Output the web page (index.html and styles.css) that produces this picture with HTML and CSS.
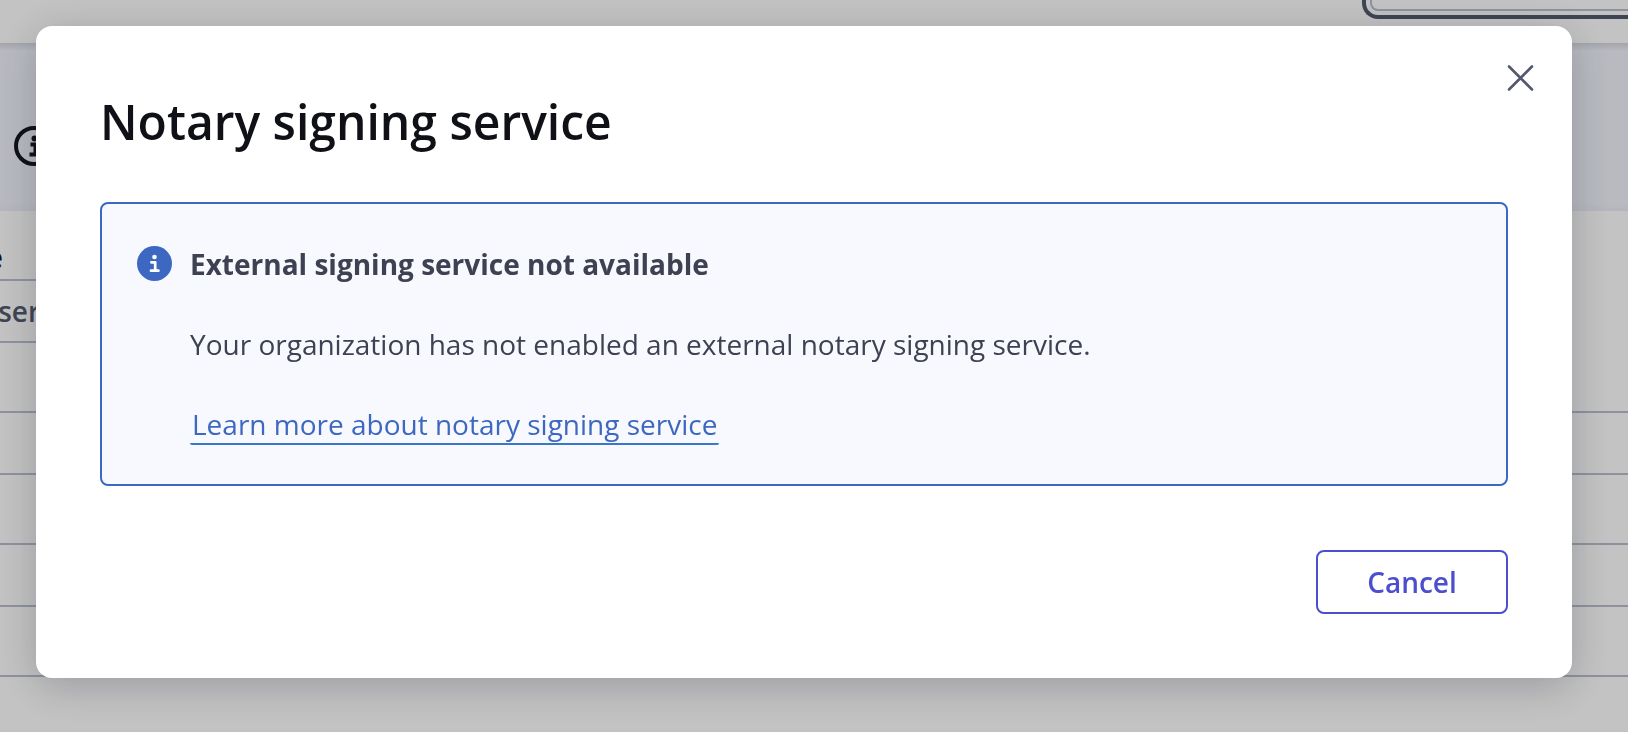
FILE: index.html
```html
<!DOCTYPE html>
<html lang="en">
<head>
<meta charset="utf-8">
<title>Notary signing service</title>
<link rel="stylesheet" href="styles.css">
</head>
<body>
<main class="page">
  <header class="topbar">
    <div class="field-focus"><input class="field" type="text" aria-label="Search"></div>
  </header>
  <section class="banner">
    <svg class="banner-icon" viewBox="0 0 40 40" aria-hidden="true">
      <circle cx="20" cy="20" r="18" fill="none" stroke="#15161c" stroke-width="4"/>
      <circle cx="20.500" cy="12.500" r="3" fill="#15161c"/>
      <path d="M16.500 18.500h5v10M15.500 28.500h10" fill="none" stroke="#15161c" stroke-width="4"/>
    </svg>
  </section>
  <section class="rows">
    <div class="group-name"><span>e</span></div>
    <div class="group-head"><span>ser</span></div>
    <div class="row row-tall"></div>
    <div class="row"></div>
    <div class="row row-tall"></div>
    <div class="row"></div>
    <div class="row row-tall"></div>
  </section>
</main>
<div class="backdrop">
  <div class="dialog" role="dialog" aria-modal="true" aria-labelledby="dialog-title">
    <button class="close" type="button" aria-label="Close">
      <svg viewBox="0 0 40 40" aria-hidden="true"><path d="M9 8.500l23 23M32 8.500l-23 23" fill="none" stroke="#53586d" stroke-width="2.600" stroke-linecap="round"/></svg>
    </button>
    <h1 class="title" id="dialog-title">Notary signing service</h1>
    <div class="alert">
      <svg class="alert-icon" viewBox="0 0 36 36" aria-hidden="true">
        <circle cx="18.500" cy="18.500" r="17.500" fill="#3d68c1"/>
        <circle cx="18.500" cy="12" r="2.300" fill="#fff"/>
        <path d="M15.300 17.300h3.900v8M15 25.700h7.400" fill="none" stroke="#fff" stroke-width="2.700" stroke-linecap="round" stroke-linejoin="round"/>
      </svg>
      <div class="alert-body">
        <h2 class="alert-title">External signing service not available</h2>
        <p class="alert-text">Your organization has not enabled an external notary signing service.</p>
        <a class="alert-link" href="#">Learn more about notary signing service</a>
      </div>
    </div>
    <div class="actions"><button class="cancel" type="button">Cancel</button></div>
  </div>
</div>
</body>
</html>
```
FILE: styles.css
```css
* { box-sizing: border-box; }
body {
  margin: 0;
  min-height: 100vh;
  overflow: hidden;
  background: #fff;
  font-family: "Open Sans", "Noto Sans", sans-serif;
  font-size: 28px;
  line-height: 40px;
  color: #3d4152;
}
.topbar {
  display: flex;
  justify-content: flex-end;
  align-items: flex-start;
  height: 43px;
  overflow: hidden;
}
.field-focus {
  width: 266px;
  height: 19px;
  padding: 0 0 4px 4px;
  border: solid #535a6c;
  border-width: 0 0 4px 4px;
  border-bottom-left-radius: 16px;
}
.field {
  display: block;
  width: 100%;
  height: 11px;
  padding: 0;
  border: solid #bbbfcf;
  border-width: 0 0 2px 2px;
  border-bottom-left-radius: 8px;
  background: #fff;
}
.banner {
  height: 168px;
  padding: 83px 14px 0;
  background: linear-gradient(#d6d8e1, #f2f4fc 8px, #f2f4fc 160px, #eceef7);
}
.banner-icon { display: block; width: 40px; height: 40px; }
.group-name, .group-head {
  display: flex;
  justify-content: flex-end;
  align-items: center;
  font-weight: 600;
}
.group-name { width: 3px; height: 68px; padding-top: 24px; color: #15161c; }
.group-head {
  width: 40px;
  height: 64px;
  border: solid #bbbfcf;
  border-width: 2px 0;
  color: #535a6c;
}
.row { height: 62px; border-bottom: 2px solid #bbbfcf; }
.row-tall { height: 70px; }
.backdrop {
  position: fixed;
  inset: 0;
  padding: 26px 56px 54px 36px;
  background: rgba(0, 0, 0, .235);
}
.dialog {
  position: relative;
  padding: 64px;
  border-radius: 16px;
  background: #fff;
  box-shadow: 0 8px 40px rgba(19, 24, 42, .24);
}
.close {
  position: absolute;
  top: 32px;
  right: 32px;
  width: 40px;
  height: 40px;
  padding: 0;
  border: 0;
  background: none;
}
.close svg { display: block; }
.title {
  margin: 0 0 48px;
  font-size: 48px;
  font-weight: 600;
  line-height: 64px;
  color: #101116;
}
.alert {
  display: flex;
  gap: 18px;
  padding: 40px 34px;
  border: 2px solid #3d68c1;
  border-radius: 8px;
  background: #f8f9fe;
}
.alert-icon { flex: none; width: 36px; height: 36px; margin-top: 1px; }
.alert-title { margin: 0 0 40px; font-size: 28px; font-weight: 700; }
.alert-text { margin: 0 0 40px; }
.alert-link {
  display: block;
  width: fit-content;
  margin-bottom: -1px;
  height: 41px;
  padding: 0 2px;
  border-bottom: 2px solid #3878c7;
  border-radius: 2px;
  color: #3d68c1;
  text-decoration: none;
}
.actions { display: flex; justify-content: flex-end; margin-top: 64px; }
.cancel {
  min-width: 192px;
  height: 64px;
  padding: 0 48px;
  border: 2px solid #4c4fcd;
  border-radius: 8px;
  background: #fff;
  color: #4c4fcd;
  font: 600 28px "Open Sans", "Noto Sans", sans-serif;
}
```
